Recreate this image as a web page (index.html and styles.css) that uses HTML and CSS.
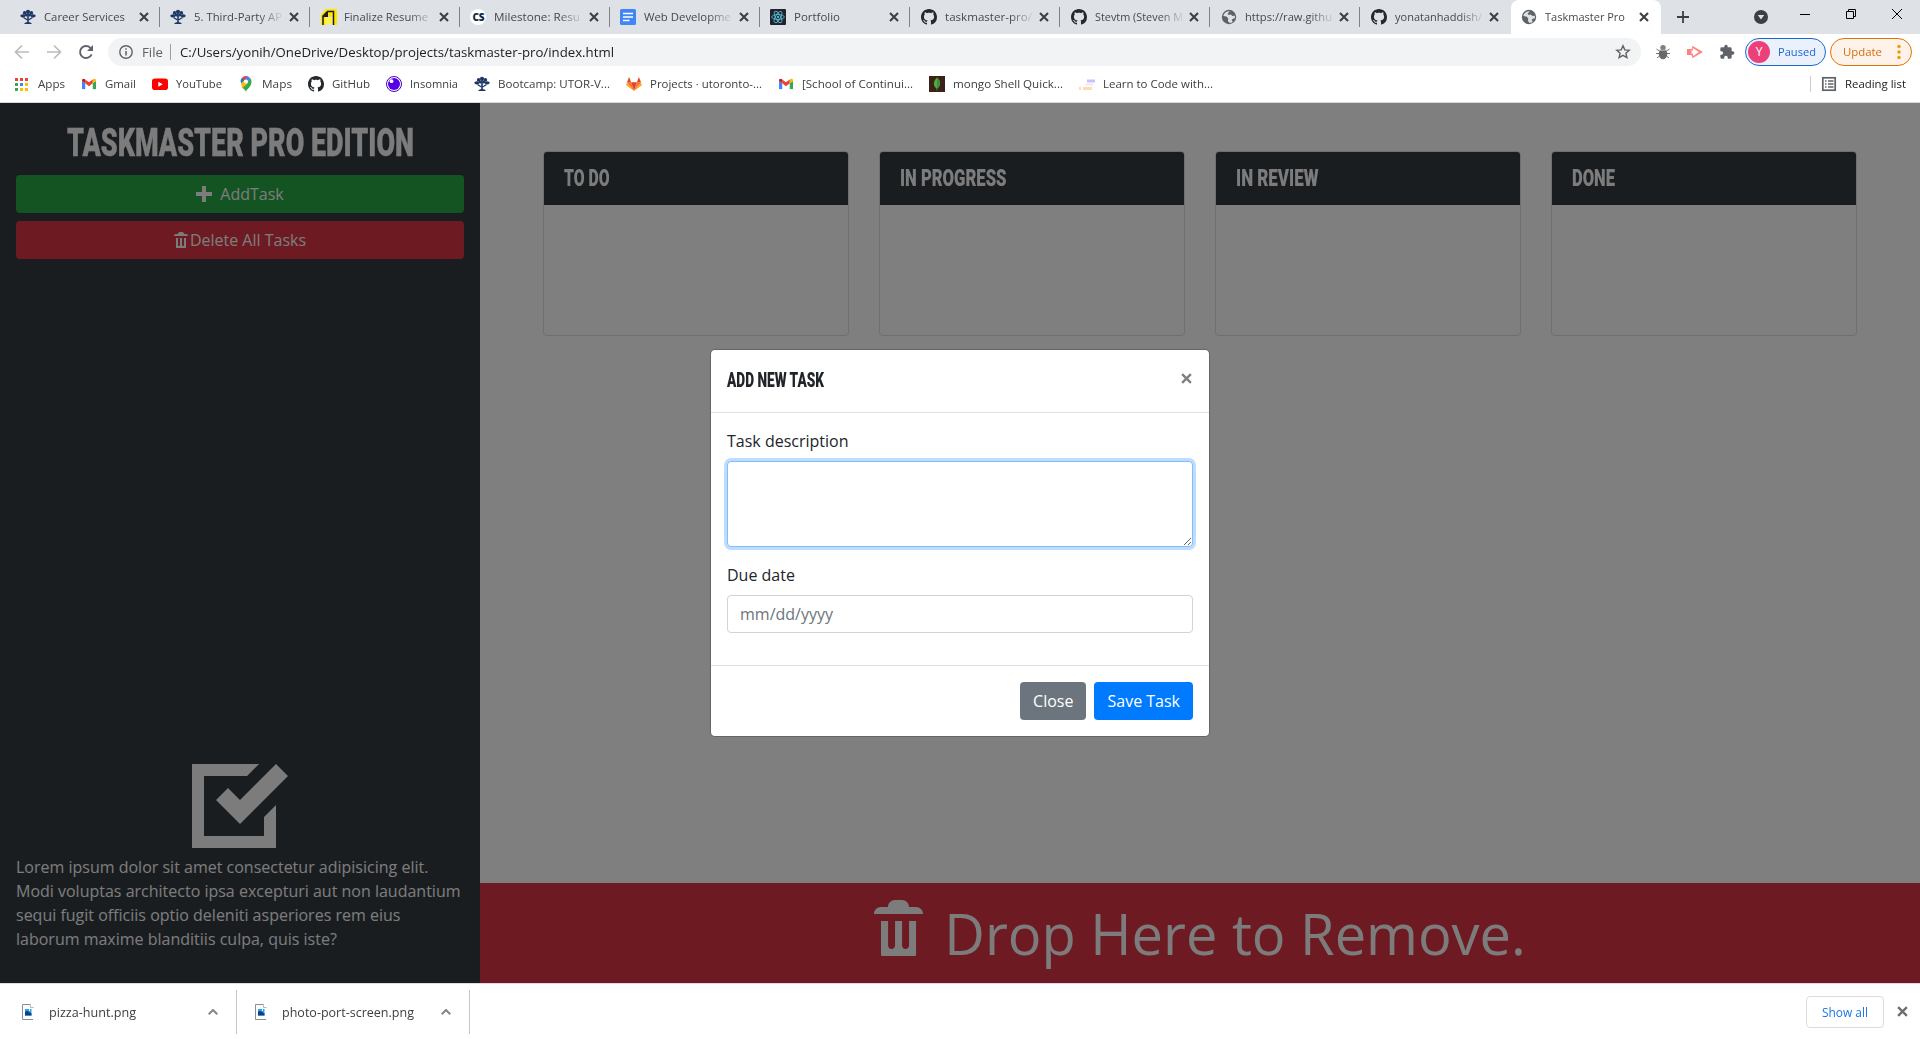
FILE: index.html
```html
<!DOCTYPE html>
<html lang="en">
<head>
<meta charset="utf-8">
<title>Taskmaster Pro</title>
<link rel="stylesheet" href="styles.css">
</head>
<body>
<svg class="defs" aria-hidden="true">
  <symbol id="tree" viewBox="0 0 16 16"><g fill="#1e3765"><circle cx="8" cy="2.800" r="2.100"/><circle cx="4.600" cy="3.900" r="1.800"/><circle cx="11.400" cy="3.900" r="1.800"/><ellipse cx="2.800" cy="6.800" rx="2.500" ry="1.600"/><ellipse cx="13.200" cy="6.800" rx="2.500" ry="1.600"/><circle cx="6.300" cy="6" r="1.500"/><circle cx="9.700" cy="6" r="1.500"/><path d="M7.200 4h1.600v9l2.700 1v1h-7v-1l2.700-1z"/></g><path d="M3.500 8.500L7.500 11M12.500 8.500L8.500 11" stroke="#1e3765" stroke-width="1.300"/></symbol>
  <symbol id="github" viewBox="0 0 16 16"><path fill="#24292e" d="M8 0C3.58 0 0 3.58 0 8c0 3.54 2.29 6.53 5.47 7.59.4.07.55-.17.55-.38 0-.19-.01-.82-.01-1.49-2.01.37-2.53-.49-2.69-.94-.09-.23-.48-.94-.82-1.13-.28-.15-.68-.52-.01-.53.63-.01 1.08.58 1.23.82.72 1.21 1.87.87 2.33.66.07-.52.28-.87.51-1.07-1.78-.2-3.64-.89-3.64-3.95 0-.87.31-1.59.82-2.15-.08-.2-.36-1.02.08-2.12 0 0 .67-.21 2.2.82.64-.18 1.32-.27 2-.27s1.36.09 2 .27c1.53-1.04 2.2-.82 2.2-.82.44 1.1.16 1.92.08 2.12.51.56.82 1.27.82 2.15 0 3.07-1.87 3.75-3.65 3.95.29.25.54.73.54 1.48 0 1.07-.01 1.93-.01 2.2 0 .21.15.46.55.38A8.01 8.01 0 0 0 16 8c0-4.42-3.58-8-8-8z"/></symbol>
  <symbol id="globe" viewBox="0 0 16 16"><circle cx="8" cy="8" r="7.2" fill="#5f6368"/><path fill="#dee1e6" d="M8.800 2.200C5.500 2 3 4 2.300 7l3.200.6 1.800 1.900-.4 2.300 1.300 2c1.300.1 2.500-.2 3.500-.9l-1-2.100 1.500-1.300h1.500c.3-1 .3-1.800.1-2.700l-2.300.3-1.800-1.500-2 .4-1.200-1.200z"/></symbol>
  <symbol id="cross" viewBox="0 0 10 10"><path d="M1 1l8 8M9 1l-8 8" stroke="currentColor" stroke-width="2.100" fill="none"/></symbol>
  <symbol id="gmail" viewBox="0 0 16 12"><path fill="#4285f4" d="M1 12h2.700V5.200L0 2.500V11a1 1 0 0 0 1 1z"/><path fill="#34a853" d="M12.300 12H15a1 1 0 0 0 1-1V2.500l-3.700 2.700z"/><path fill="#fbbc04" d="M12.300.9v4.300L16 2.500V1.600C16 .1 14.300-.6 13.100.3z"/><path fill="#ea4335" d="M3.700 5.200V.9L8 4.100 12.300.9v4.300L8 8.500z"/><path fill="#c5221f" d="M0 1.600v.9l3.700 2.700V.9L2.900.3C1.700-.6 0 .1 0 1.600z"/></symbol>
  <symbol id="trash" viewBox="0 0 8 8"><path fill="currentColor" d="M3 0c-.55 0-1 .45-1 1h-1c-.55 0-1 .45-1 1h7c0-.55-.45-1-1-1h-1c0-.55-.45-1-1-1h-1zm-2 3v4.810c0 .11.08.19.19.19h4.630c.11 0 .19-.08.19-.19v-4.810h-1v3.500c0 .28-.22.5-.5.5s-.5-.22-.5-.5v-3.500h-1v3.500c0 .28-.22.5-.5.5s-.5-.22-.5-.5v-3.500h-1z"/></symbol>
  <symbol id="chevron" viewBox="0 0 10 6"><path d="M.7 5.300L5 1l4.300 4.300" fill="none" stroke="#80868b" stroke-width="2"/></symbol>
  <symbol id="file" viewBox="0 0 12 16"><path d="M.5.5h8.200l2.800 2.800v12.200H.5z" fill="#fbfcfd"/><path d="M11 15.500H.5V.5h8" fill="none" stroke="#8b8f94"/><path d="M8.500.5v3h3" fill="#fff" stroke="#b5b8bc"/><path d="M3 5h6.500v6.500H3z" fill="#2fa3e6"/><path d="M3 8l2-1.200 4.500 2.700v2H3z" fill="#0b3f8a"/><path d="M7 5h1v2H7z" fill="#e8f6ff"/></symbol>
</svg>

<div class="browser">
  <header class="tabs">
    <div class="tab"><svg class="fav"><use href="#tree"/></svg><div class="label"><span data-w="81">Career Services</span></div><svg class="x"><use href="#cross"/></svg></div>
    <div class="tab"><svg class="fav"><use href="#tree"/></svg><div class="label fade"><span data-w="88">5. Third-Party AP</span></div><svg class="x"><use href="#cross"/></svg></div>
    <div class="tab"><svg class="fav note" viewBox="0 0 16 16"><path fill="#ffe600" d="M0 5.500L4.500 0H16v16H0z"/><path fill="#dee1e6" d="M5 8h6.500v8H5z"/><path fill="#fff04a" d="M4 9h7v6H4z"/><path d="M2 16V7l4.500-4.500h6V16" fill="none" stroke="#1d1d1d" stroke-width="1.500"/><path fill="#1d1d1d" d="M1.500 8L7 2v6z"/></svg><div class="label fade"><span data-w="84">Finalize Resume</span></div><svg class="x"><use href="#cross"/></svg></div>
    <div class="tab"><span class="fav cs">CS</span><div class="label fade"><span data-w="86">Milestone: Resu</span></div><svg class="x"><use href="#cross"/></svg></div>
    <div class="tab"><svg class="fav" viewBox="0 0 16 16"><rect width="16" height="16" rx="1.500" fill="#4285f4"/><path d="M3 4.500h10M3 8h10M3 11.500h6.500" stroke="#fff" stroke-width="1.600"/></svg><div class="label fade"><span data-w="87">Web Developme</span></div><svg class="x"><use href="#cross"/></svg></div>
    <div class="tab"><svg class="fav" viewBox="0 0 16 16"><rect width="16" height="16" rx="1" fill="#20232a"/><g fill="none" stroke="#53b9d1" stroke-width=".9"><ellipse cx="8" cy="8" rx="6.300" ry="2.500"/><ellipse cx="8" cy="8" rx="6.300" ry="2.500" transform="rotate(60 8 8)"/><ellipse cx="8" cy="8" rx="6.300" ry="2.500" transform="rotate(120 8 8)"/></g><circle cx="8" cy="8" r="1.200" fill="#53b9d1"/></svg><div class="label"><span data-w="46">Portfolio</span></div><svg class="x"><use href="#cross"/></svg></div>
    <div class="tab"><svg class="fav"><use href="#github"/></svg><div class="label fade"><span data-w="87">taskmaster-pro/</span></div><svg class="x"><use href="#cross"/></svg></div>
    <div class="tab"><svg class="fav"><use href="#github"/></svg><div class="label fade"><span data-w="88">Stevtm (Steven M</span></div><svg class="x"><use href="#cross"/></svg></div>
    <div class="tab"><svg class="fav"><use href="#globe"/></svg><div class="label fade"><span data-w="87">https://raw.githu</span></div><svg class="x"><use href="#cross"/></svg></div>
    <div class="tab"><svg class="fav"><use href="#github"/></svg><div class="label fade"><span data-w="87">yonatanhaddish/</span></div><svg class="x"><use href="#cross"/></svg></div>
    <div class="tab active"><svg class="fav"><use href="#globe"/></svg><div class="label"><span data-w="80">Taskmaster Pro</span></div><svg class="x"><use href="#cross"/></svg></div>
    <svg class="newtab" viewBox="0 0 12 12"><path d="M6 0v12M0 6h12" stroke="#3c4043" stroke-width="1.800"/></svg>
    <div class="window-controls">
      <svg class="search" viewBox="0 0 14 14"><circle cx="7" cy="7" r="7" fill="#3c4043"/><path d="M3.800 5h6.400L7 9.500z" fill="#dee1e6"/></svg>
      <svg viewBox="0 0 10 10"><path d="M0 5.500h10" stroke="#000"/></svg>
      <svg viewBox="0 0 10 10"><path d="M.5 2.500h7v7h-7zM2.500 2.500v-2h7v7h-2" fill="none" stroke="#000"/></svg>
      <svg viewBox="0 0 10 10"><path d="M0 0l10 10M10 0L0 10" stroke="#000"/></svg>
    </div>
  </header>

  <div class="toolbar">
    <svg class="nav" viewBox="0 0 16 16"><path d="M15 8H2M8 1.500L1.500 8 8 14.500" fill="none" stroke="#babcbe" stroke-width="1.700"/></svg>
    <svg class="nav" viewBox="0 0 16 16"><path d="M1 8h13M8 1.500L14.500 8 8 14.500" fill="none" stroke="#babcbe" stroke-width="1.700"/></svg>
    <svg class="nav reload" viewBox="0 0 16 16"><path d="M13.600 10.300A6 6 0 1 1 12.300 3.800L14 5.500" fill="none" stroke="#5f6368" stroke-width="1.900"/><path d="M15 1v6H9z" fill="#5f6368"/></svg>
    <div class="omnibox">
      <svg class="info" viewBox="0 0 14 14"><circle cx="7" cy="7" r="6.200" fill="none" stroke="#5f6368" stroke-width="1.400"/><path d="M7 6v4.500M7 3.300v1.500" stroke="#5f6368" stroke-width="1.500"/></svg>
      <span class="scheme" data-w="21">File</span><i class="bar"></i>
      <span class="url" data-w="434">C:/Users/yonih/OneDrive/Desktop/projects/taskmaster-pro/index.html</span>
      <svg class="star" viewBox="0 0 16 16"><path d="M8 1.800l1.800 4.100 4.400.4-3.300 2.900 1 4.400L8 11.300l-3.900 2.300 1-4.400L1.800 6.300l4.400-.4z" fill="none" stroke="#5f6368" stroke-width="1.400"/></svg>
    </div>
    <svg class="ext" viewBox="0 0 16 16"><g stroke="#777" stroke-width="1" fill="none"><path d="M1.500 5l3 2M14.500 5l-3 2M1 9.500h3M15 9.500h-3M2 14l2.500-2M14 14l-2.500-2"/></g><ellipse cx="8" cy="10" rx="4.300" ry="5.300" fill="#67696b"/><circle cx="8" cy="3.600" r="2.700" fill="#7e8082"/><path d="M4.500 6.200h7" stroke="#bbb"/></svg>
    <svg class="ext" viewBox="0 0 16 16"><path fill="#ff8080" fill-rule="evenodd" d="M0 5h4.500v6H0zM5.200 1.800L16 8 5.200 14.200V11.800h1.500L12 8 6.700 4.500H5.200z"/><path d="M5.200 4.500v2M5.200 9.500v2.500" stroke="#ff8080" stroke-width="1.500"/></svg>
    <svg class="ext puzzle" viewBox="0 0 24 24"><path fill="#5f6368" d="M20.500 11H19V7a2 2 0 0 0-2-2h-4V3.500a2.500 2.500 0 0 0-5 0V5H4a2 2 0 0 0-2 2v3.800h1.500a2.700 2.700 0 0 1 0 5.400H2V20a2 2 0 0 0 2 2h3.800v-1.500a2.700 2.700 0 0 1 5.400 0V22H17a2 2 0 0 0 2-2v-4h1.500a2.500 2.500 0 0 0 0-5z"/></svg>
    <div class="pill paused"><span class="avatar">Y</span><span data-w="38">Paused</span></div>
    <div class="pill update"><span data-w="39">Update</span><svg viewBox="0 0 4 16"><g fill="#f29900"><circle cx="2" cy="2.500" r="1.700"/><circle cx="2" cy="8" r="1.700"/><circle cx="2" cy="13.500" r="1.700"/></g></svg></div>
  </div>

  <nav class="bookmarks">
    <a><svg viewBox="0 0 16 16"><path fill="#ea4335" d="M1 2h3v3H1zM6 2h3v3H6zM11 2h3v3h-3z"/><path fill="#34a853" d="M1 7h3v3H1zM1 12h3v3H1z"/><path fill="#4285f4" d="M6 7h3v3H6z"/><path fill="#fbbc04" d="M11 7h3v3h-3zM6 12h3v3H6zM11 12h3v3h-3z"/></svg><span data-w="27">Apps</span></a>
    <a><svg><use href="#gmail" x="1" y="2.500" width="14" height="11"/></svg><span data-w="31">Gmail</span></a>
    <a><svg viewBox="0 0 16 16"><rect y="2.500" width="16" height="11.500" rx="2.800" fill="#f00"/><path d="M6.300 5.700v5l4.400-2.500z" fill="#fff"/></svg><span data-w="46">YouTube</span></a>
    <a><svg viewBox="0 0 16 16"><path fill="#34a853" d="M8 16c.6-3 5.500-5 5.500-10.200C13.500 4.500 13 3 12.200 2.200L4 11.300C5.500 13 7.500 14 8 16z"/><path fill="#4285f4" d="M8 0c2 0 3.500 1 4.300 2.300L8.800 6.400 6 4z"/><path fill="#ea4335" d="M3.800 2C4.800.7 6.300 0 8 0L9.600.3 5.500 5z"/><path fill="#1a73e8" d="M3.800 2L6.500 4.200l-3 3.500C2 5.500 2.600 3.300 3.800 2z"/><path fill="#fbbc04" d="M3.300 7.600L6.400 4l3.800 3.100-5.600 5C3.800 10.800 3 9.400 3.300 7.600z"/><circle cx="8" cy="5.600" r="2" fill="#fff"/></svg><span data-w="30">Maps</span></a>
    <a><svg><use href="#github"/></svg><span data-w="38">GitHub</span></a>
    <a><svg viewBox="0 0 16 16"><circle cx="8" cy="8" r="7.500" fill="#fff" stroke="#4000bf"/><circle cx="8" cy="8" r="6" fill="#5600e8"/><circle cx="5.500" cy="5.200" r="1.900" fill="#fff"/></svg><span data-w="48">Insomnia</span></a>
    <a><svg><use href="#tree"/></svg><span data-w="112">Bootcamp: UTOR-V...</span></a>
    <a><svg viewBox="0 0 16 16"><path fill="#e24329" d="M8 15L5 6.300h6z"/><path fill="#fc6d26" d="M8 15L5 6.300H1zM8 15l3-8.700h4z"/><path fill="#fca326" d="M8 15L1 6.300l-.8 2.900zM8 15l7-8.700.8 2.900z"/><path fill="#e24329" d="M1 6.300h4L3.200 1zM15 6.300h-4L12.800 1z"/></svg><span data-w="112">Projects · utoronto-...</span></a>
    <a><svg><use href="#gmail" x="1" y="2.500" width="14" height="11"/></svg><span data-w="111">[School of Continui...</span></a>
    <a><svg viewBox="0 0 16 16"><rect width="16" height="16" fill="#3a2219"/><path d="M8 1.500c4.400 4 4 8 .2 11.300v2h-.5v-2C3.800 9.500 4 5.500 8 1.500z" fill="#4faa41"/><path d="M8 1.500c4.400 4 4 8 0 11.300z" fill="#3f8f3c"/></svg><span data-w="110">mongo Shell Quick...</span></a>
    <a><svg viewBox="0 0 16 16"><path d="M8 5h8" stroke="#c9c1ff" stroke-width="3"/><path d="M6 8.500h8" stroke="#eee9f5" stroke-width="2"/><path d="M0 12.500h2M4 12.500h9" stroke="#ffdcae" stroke-width="3"/></svg><span data-w="110">Learn to Code with...</span></a>
    <a class="reading"><svg viewBox="0 0 16 16"><rect x="1.800" y="1.800" width="12.400" height="12.400" fill="none" stroke="#5f6368" stroke-width="1.700"/><path d="M4 5h1.500M4 8h1.500M4 11h1.500M7 5h5.500M7 8h5.500M7 11h5.500" stroke="#5f6368" stroke-width="1.400"/></svg><span data-w="61">Reading list</span></a>
  </nav>

  <div class="page">
    <aside class="sidebar">
      <h1><span data-w="347">TASKMASTER PRO EDITION</span></h1>
      <button class="btn block success"><svg viewBox="0 0 8 8"><path fill="currentColor" d="M3 0v3h-3v2h3v3h2v-3h3v-2h-3v-3h-2z"/></svg><span>AddTask</span></button>
      <button class="btn block danger"><svg><use href="#trash"/></svg><span>Delete All Tasks</span></button>
      <div class="about">
        <svg viewBox="0 0 8 8"><path fill="currentColor" d="M0 0v7h7v-3.590l-1 1v1.590h-5v-5h3.590l1-1h-5.590zm7 0l-3 3-1-1-1 1 2 2 4-4-1-1z"/></svg>
        <p>Lorem ipsum dolor sit amet consectetur adipisicing elit. Modi voluptas architecto ipsa excepturi aut non laudantium sequi fugit officiis optio deleniti asperiores rem eius laborum maxime blanditiis culpa, quis iste?</p>
      </div>
    </aside>
    <main class="board">
      <div class="columns">
        <section class="card"><h4><span data-w="45.5">TO DO</span></h4></section>
        <section class="card"><h4><span data-w="106.5">IN PROGRESS</span></h4></section>
        <section class="card"><h4><span data-w="82.5">IN REVIEW</span></h4></section>
        <section class="card"><h4><span data-w="43">DONE</span></h4></section>
      </div>
      <div class="dropzone"><svg><use href="#trash"/></svg><span>Drop Here to Remove.</span></div>
    </main>
    <div class="backdrop">
      <div class="modal">
        <div class="modal-header"><h5><span data-w="97">ADD NEW TASK</span></h5><svg><use href="#cross"/></svg></div>
        <div class="modal-body">
          <label>Task description</label>
          <textarea class="control focused"></textarea>
          <label>Due date</label>
          <input class="control" placeholder="mm/dd/yyyy">
        </div>
        <div class="modal-footer"><button class="btn secondary">Close</button><button class="btn primary">Save Task</button></div>
      </div>
    </div>
  </div>

  <footer class="downloads">
    <div class="item"><svg class="doc"><use href="#file"/></svg><span data-w="87">pizza-hunt.png</span><svg class="chev"><use href="#chevron"/></svg></div>
    <div class="item"><svg class="doc"><use href="#file"/></svg><span data-w="132">photo-port-screen.png</span><svg class="chev"><use href="#chevron"/></svg></div>
    <div class="show-all"><span data-w="46">Show all</span></div>
    <svg class="x"><use href="#cross"/></svg>
  </footer>
</div>
<script src="fit.js"></script>
</body>
</html>
```
FILE: styles.css
```css
* { box-sizing: border-box; }
body { margin: 0; font: 16px/24px "Open Sans", "Noto Sans", sans-serif; color: #212529; }
h1, h4, h5, p { margin: 0; }
svg { display: block; flex: none; }
.defs { position: absolute; width: 0; height: 0; }
[data-w] { display: block; flex: none; white-space: nowrap; transform-origin: 0 50%; }
.browser { width: 1920px; height: 1039px; overflow: hidden; display: flex; flex-direction: column; background: #fff; }

/* Tab strip */
.tabs { height: 34px; flex: none; display: flex; padding-left: 10px; background: #dee1e6; font-size: 11.5px; color: #45494d; }
.tab { width: 150.1px; height: 34px; flex: none; display: flex; align-items: center; padding-left: 10px; }
.tab:not(.active)::after { content: ""; width: 1px; height: 20px; background: #808387; margin-left: 10px; }
.tab:nth-child(10)::after { visibility: hidden; }
.tab.active { background: #fff; border-radius: 8px 8px 0 0; }
.fav { width: 16px; height: 16px; flex: none; }
.note { margin-left: 1px; margin-right: -1px; }
.cs { border-radius: 50%; background: #fff; color: #14284b; font: 800 10px/16px "Open Sans", sans-serif; text-align: center; letter-spacing: -.3px; }
.label { width: 94.500px; flex: none; margin-left: 8px; }
.label.fade { width: 90px; margin-right: 4.500px; -webkit-mask-image: linear-gradient(90deg, #000 72%, transparent 100%); mask-image: linear-gradient(90deg, #000 72%, transparent 100%); }
.tab .x { width: 10px; height: 10px; color: #3c4043; }
.newtab { width: 12px; height: 12px; margin: 11px 0 0 16px; }
.window-controls { margin-left: auto; padding-right: 18px; display: flex; gap: 36px; height: 28px; align-items: center; }
.window-controls svg { width: 10px; height: 10px; }
.window-controls .search { width: 14px; height: 14px; margin-top: 6px; margin-right: -4px; }

/* Address row */
.toolbar { height: 36px; flex: none; display: flex; align-items: center; padding-left: 14px; font-size: 11.5px; }
.nav { width: 16px; height: 16px; margin-right: 16px; }
.reload { margin-right: 14px; }
.omnibox { width: 1533px; height: 28px; border-radius: 14px; background: #f1f3f4; display: flex; align-items: center; padding: 0 10px 0 11px; font-size: 13px; color: #202124; }
.info { width: 14px; height: 14px; margin-right: 9px; }
.scheme { color: #5f6368; }
.bar { width: 1px; height: 16px; background: #9aa0a6; margin: 0 9px 0 7px; }
.star { width: 16px; height: 16px; margin-left: auto; }
.ext { width: 16px; height: 16px; margin-left: 16px; }
.omnibox + .ext { margin-left: 14px; }
.pill { height: 28px; border-radius: 14px; border: 1px solid #1967d2; display: flex; align-items: center; }
.paused { width: 81px; margin-left: 10px; padding-left: 2px; background: #ebf1fc; color: #1967d2; }
.avatar { width: 22px; height: 22px; border-radius: 50%; margin-right: 8px; background: #ec407a; color: #fff; text-align: center; font: 12px/22px "Open Sans", sans-serif; }
.update { width: 82px; margin-left: 4px; padding-left: 12px; border-color: #e37400; background: #fdf3ea; color: #d56e0c; }
.update svg { width: 4px; height: 16px; margin-left: 15px; }

/* Bookmarks */
.bookmarks { height: 33px; flex: none; display: flex; gap: 16px; padding: 0 14px 5px; border-bottom: 1px solid #d8d8da; font-size: 11.5px; color: #3c4043; }
.bookmarks a { display: flex; align-items: center; gap: 8px; }
.bookmarks svg { width: 16px; height: 16px; }
.bookmarks .reading { margin-left: auto; color: #202124; }
.reading::before { content: ""; width: 1px; height: 16px; background: #c9ccd0; margin-right: 2px; }

/* Web page */
.page { position: relative; height: 880px; flex: none; display: flex; }
.sidebar { width: 480px; background: #343a40; color: #f8f9fa; padding: 16px; display: flex; flex-direction: column; }
h1, h4, h5 { font-family: Roboto, "Liberation Sans", sans-serif; font-weight: 900; }
h1 { display: flex; justify-content: center; font-size: 39.500px; line-height: 48px; margin-bottom: 8px; -webkit-text-stroke: .3px currentColor; }
.btn { border: 0; border-radius: 4px; height: 38px; padding: 0 13px; font: inherit; color: #fff; }
.block { display: flex; width: 100%; align-items: center; justify-content: center; margin-bottom: 8px; color: #f8f9fa; }
.block svg { width: 16px; height: 16px; }
.success { background: #28a745; }
.success span { margin-left: 8px; }
.danger { background: #dc3545; }
.about { margin-top: auto; color: #f8f9fa; padding-bottom: 16px; }
.about svg { width: 96px; height: 96px; margin: 0 auto -5px; }
.board { flex: 1; display: flex; flex-direction: column; background: #fff; }
.columns { display: grid; grid-template-columns: repeat(4, 1fr); gap: 30px; padding: 48px 63px; }
.card { height: 185px; border: 1px solid rgba(0,0,0,.125); border-radius: 4px; overflow: hidden; }
.card h4 { height: 53px; padding: 0 20px; background: #343a40; color: #f8f9fa; font-size: 24.500px; line-height: 52px; border-bottom: 1px solid rgba(0,0,0,.125); }
.dropzone { margin-top: auto; height: 100px; background: #dc3545; color: #f8f9fa; display: flex; justify-content: center; align-items: center; font-size: 56px; line-height: 84px; }
.dropzone svg { width: 56px; height: 56px; margin: 0 14px 10px 0; }
.backdrop { position: absolute; inset: 0; background: rgba(0,0,0,.5); }

/* Dialog */
.modal { width: 500px; height: 388px; margin: 246px auto 0; background: #fff; background-clip: padding-box; border: 1px solid rgba(0,0,0,.2); border-radius: 5px; }
.modal-header { height: 63px; padding: 16px; display: flex; justify-content: space-between; border-bottom: 1px solid #dee2e6; }
h5 { font-size: 20px; line-height: 29px; }
.modal-header svg { width: 11px; height: 11px; margin: 7px 1px 0 0; color: #7f7f7f; }
.modal-body { height: 252px; padding: 16px; display: flex; flex-direction: column; }
.modal-body label { margin-bottom: 8px; }
.control { width: 100%; height: 38px; flex: none; border: 1px solid #ced4da; border-radius: 4px; padding: 6px 12px; font: inherit; outline: none; }
.control::placeholder { color: #6c757d; opacity: 1; }
.focused { height: 86px; margin-bottom: 16px; border-color: #80bdff; box-shadow: 0 0 0 3px rgba(0,123,255,.25); }
.modal-footer { border-top: 1px solid #dee2e6; padding: 16px; display: flex; justify-content: flex-end; gap: 8px; }
.secondary { background: #6c757d; }
.primary { background: #007bff; }

/* Download shelf */
.downloads { flex: 1; display: flex; align-items: center; border-top: 1px solid #e0dddd; font-size: 11.8px; color: #3c4043; }
.item { display: flex; align-items: center; width: 237px; height: 44px; padding-left: 22px; border-right: 1px solid #c6c8ca; }
.item + .item { width: 233px; padding-left: 18px; }
.doc { width: 12px; height: 16px; margin-right: 15px; }
.chev { width: 10px; height: 6px; margin: 0 18px 0 auto; }
.show-all { margin-left: auto; width: 78px; height: 32px; display: flex; align-items: center; justify-content: center; border: 1px solid #dadce0; border-radius: 4px; color: #1a73e8; font-weight: 500; }
.downloads > .x { width: 11px; height: 11px; margin: 0 12.500px; color: #6b6f73; }
```
FILE: fit.js
```js
// Condense each label to the width given in its data-w attribute.
document.querySelectorAll('[data-w]').forEach(function (el) {
  var target = Number(el.dataset.w);
  el.style.width = 'max-content';
  var natural = el.getBoundingClientRect().width;
  el.style.width = target + 'px';
  el.style.transform = 'scaleX(' + (target / natural) + ')';
});
```
